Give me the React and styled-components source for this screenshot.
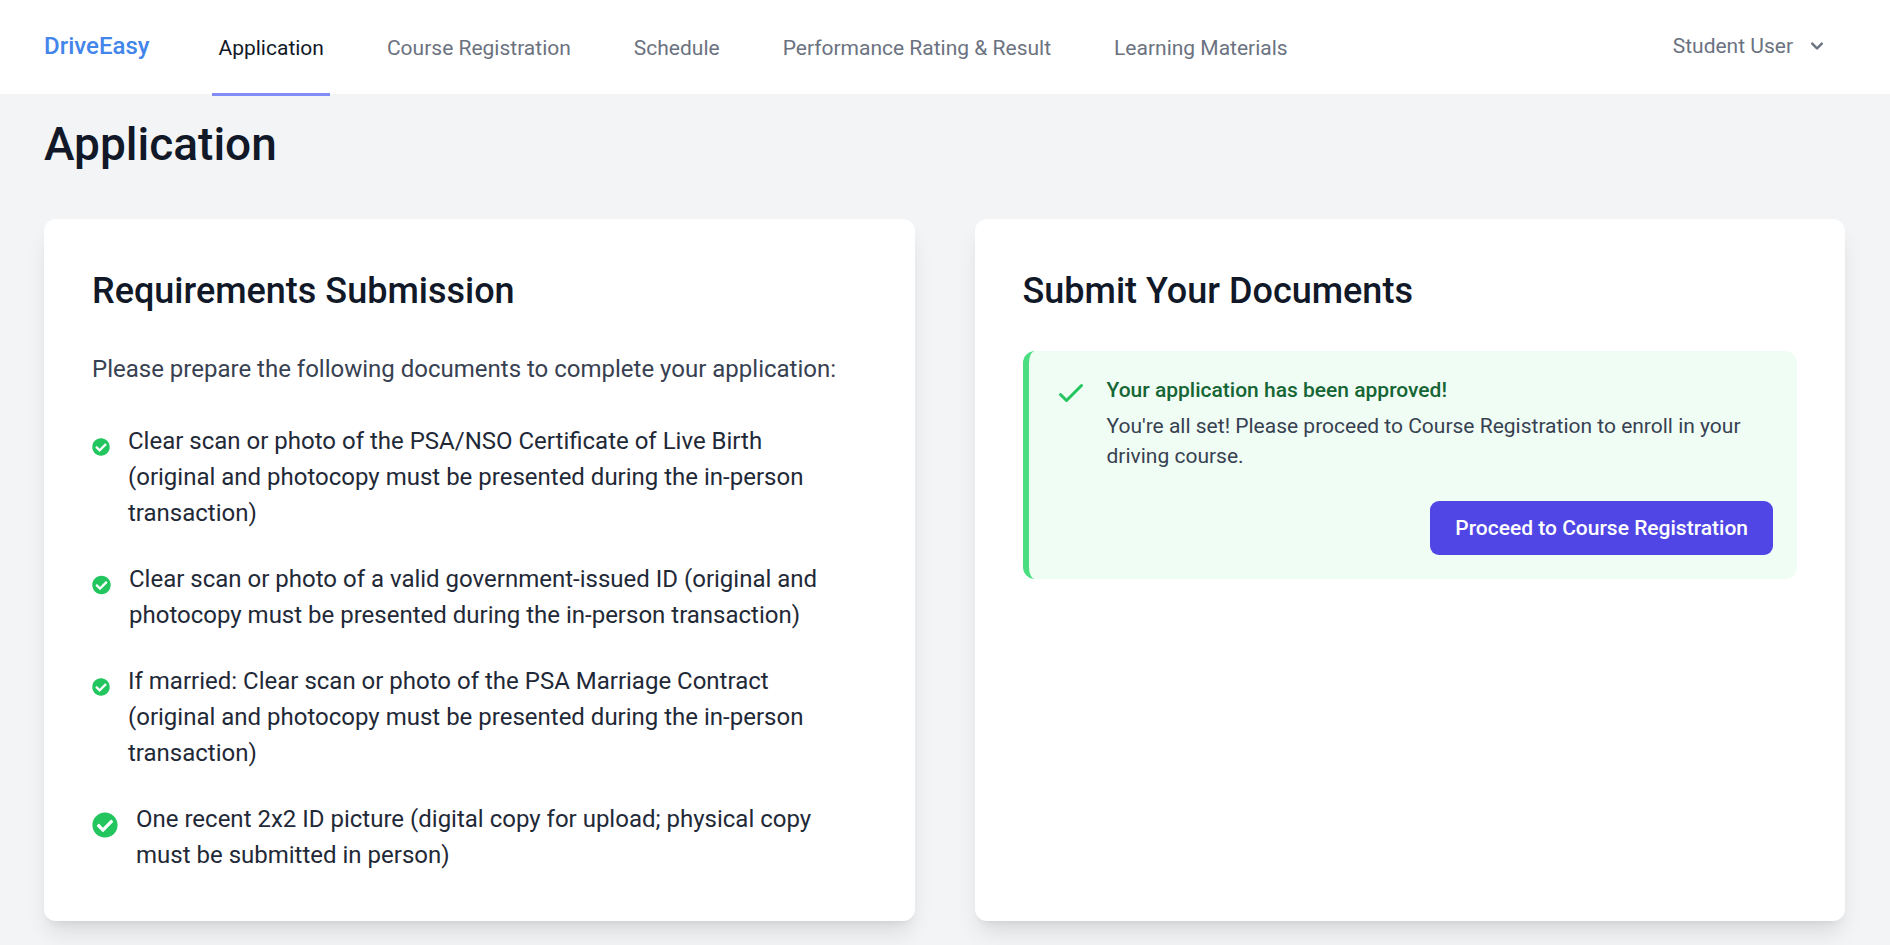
import React from "react";
import styled, { createGlobalStyle } from "styled-components";
import { FaCheckCircle } from "react-icons/fa";

const GlobalStyle = createGlobalStyle`
  *, *::before, *::after { box-sizing: border-box; }
  body {
    margin: 0;
    background: #f3f4f6;
    color: #111827;
    font-family: Roboto, "Liberation Sans", sans-serif;
  }
  h1, h2, h3, p, ul { margin: 0; padding: 0; }
  button { font-family: inherit; }
`;

const Page = styled.div`
  min-height: 100vh;
  background: #f3f4f6;
`;

const Header = styled.header`
  display: flex;
  align-items: center;
  height: 94px;
  padding: 0 45px 2px 44px;
  background: #ffffff;
`;

const Brand = styled.a`
  margin-right: 63px;
  color: #4285eb;
  font-size: 24px;
  font-weight: 500;
  line-height: 36px;
  text-decoration: none;
`;

const Nav = styled.nav`
  display: flex;
  align-self: flex-start;
  gap: 51px;
  height: 96px;
`;

const NavLink = styled.a`
  display: flex;
  align-items: center;
  padding: 0 6px;
  border-top: 3px solid transparent;
  border-bottom: 3px solid ${(p) => (p.$active ? "#818cf8" : "transparent")};
  color: ${(p) => (p.$active ? "#111827" : "#6b7280")};
  font-size: 21px;
  line-height: 30px;
  white-space: nowrap;
  text-decoration: none;
`;

const UserButton = styled.button`
  display: flex;
  align-items: center;
  gap: 12px;
  margin-left: auto;
  padding: 0 16px;
  border: 0;
  background: transparent;
  color: #6b7280;
  font-size: 21px;
  line-height: 30px;
  cursor: pointer;
`;

const Chevron = styled.svg`
  width: 24px;
  height: 24px;
  fill: currentColor;
`;

const Main = styled.main`
  padding: 23px 45px 24px 44px;
`;

const PageTitle = styled.h1`
  margin-bottom: 48px;
  font-size: 46px;
  font-weight: 500;
  line-height: 54px;
`;

const Columns = styled.div`
  display: grid;
  grid-template-columns: repeat(2, minmax(0, 1fr));
  gap: 60px;
`;

const Card = styled.section`
  padding: 48px;
  border-radius: 12px;
  background: #ffffff;
  box-shadow: 0 15px 22px -4px rgba(0, 0, 0, 0.1), 0 6px 9px -6px rgba(0, 0, 0, 0.1);
`;

const CardTitle = styled.h2`
  margin-bottom: 36px;
  font-size: 36px;
  font-weight: 500;
  line-height: 48px;
`;

const Intro = styled.p`
  margin-bottom: 36px;
  color: #374151;
  font-size: 24px;
  line-height: 36px;
`;

const Requirements = styled.ul`
  display: flex;
  flex-direction: column;
  gap: 30px;
  padding-right: 24px;
  list-style: none;
`;

const Requirement = styled.li`
  display: flex;
  align-items: flex-start;
  gap: 18px;
  color: #1f2937;
  font-size: 24px;
  line-height: 36px;
`;

const RequirementIcon = styled(FaCheckCircle)`
  flex: none;
  width: ${(p) => p.$size}px;
  height: 36px;
  margin-top: 6px;
  color: #22c55e;
`;

const Alert = styled.div`
  padding: 24px;
  border-left: 6px solid #4ade80;
  border-radius: 12px;
  background: #f0fdf4;
`;

const AlertBody = styled.div`
  display: flex;
  align-items: flex-start;
  gap: 18px;
  margin-bottom: 30px;
`;

const AlertIcon = styled.svg`
  flex: none;
  width: 36px;
  height: 36px;
  fill: none;
  stroke: #22c55e;
  stroke-width: 2;
  stroke-linecap: round;
  stroke-linejoin: round;
`;

const AlertTitle = styled.h3`
  margin-bottom: 6px;
  color: #166534;
  font-size: 21px;
  font-weight: 500;
  line-height: 30px;
`;

const AlertText = styled.p`
  color: #374151;
  font-size: 21px;
  line-height: 30px;
`;

const AlertActions = styled.div`
  display: flex;
  justify-content: flex-end;
`;

const PrimaryButton = styled.button`
  padding: 12px 25px;
  border: 0;
  border-radius: 9px;
  background: #4f46e5;
  color: #ffffff;
  font-size: 21px;
  font-weight: 500;
  line-height: 30px;
  cursor: pointer;
`;

const links = [
  "Application",
  "Course Registration",
  "Schedule",
  "Performance Rating & Result",
  "Learning Materials",
];

const requirements = [
  {
    size: 18,
    text: "Clear scan or photo of the PSA/NSO Certificate of Live Birth (original and photocopy must be presented during the in-person transaction)",
  },
  {
    size: 19,
    text: "Clear scan or photo of a valid government-issued ID (original and photocopy must be presented during the in-person transaction)",
  },
  {
    size: 18,
    text: "If married: Clear scan or photo of the PSA Marriage Contract (original and photocopy must be presented during the in-person transaction)",
  },
  {
    size: 26,
    text: "One recent 2x2 ID picture (digital copy for upload; physical copy must be submitted in person)",
  },
];

export default function App() {
  return (
    <Page>
      <GlobalStyle />
      <Header>
        <Brand href="#">DriveEasy</Brand>
        <Nav>
          {links.map((label, i) => (
            <NavLink key={label} href="#" $active={i === 0} aria-current={i === 0 ? "page" : undefined}>
              {label}
            </NavLink>
          ))}
        </Nav>
        <UserButton type="button">
          Student User
          <Chevron viewBox="0 0 20 20" aria-hidden="true">
            <path
              fillRule="evenodd"
              d="M5.293 7.293a1 1 0 011.414 0L10 10.586l3.293-3.293a1 1 0 111.414 1.414l-4 4a1 1 0 01-1.414 0l-4-4a1 1 0 010-1.414z"
              clipRule="evenodd"
            />
          </Chevron>
        </UserButton>
      </Header>
      <Main>
        <PageTitle>Application</PageTitle>
        <Columns>
          <Card>
            <CardTitle>Requirements Submission</CardTitle>
            <Intro>Please prepare the following documents to complete your application:</Intro>
            <Requirements>
              {requirements.map(({ size, text }) => (
                <Requirement key={text}>
                  <RequirementIcon $size={size} aria-hidden="true" />
                  <span>{text}</span>
                </Requirement>
              ))}
            </Requirements>
          </Card>
          <Card>
            <CardTitle>Submit Your Documents</CardTitle>
            <Alert>
              <AlertBody>
                <AlertIcon viewBox="0 0 24 24" aria-hidden="true">
                  <path d="M5 13l4 4L19 7" />
                </AlertIcon>
                <div>
                  <AlertTitle>Your application has been approved!</AlertTitle>
                  <AlertText>
                    You're all set! Please proceed to Course Registration to enroll in your driving course.
                  </AlertText>
                </div>
              </AlertBody>
              <AlertActions>
                <PrimaryButton type="button">Proceed to Course Registration</PrimaryButton>
              </AlertActions>
            </Alert>
          </Card>
        </Columns>
      </Main>
    </Page>
  );
}
